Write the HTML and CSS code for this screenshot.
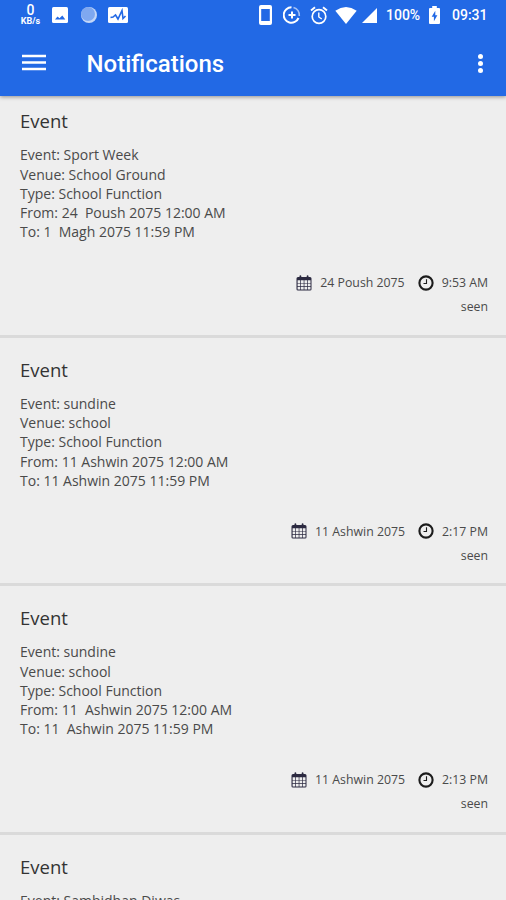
FILE: index.html
```
<!DOCTYPE html>
<html lang="en">
<head>
    <meta charset="UTF-8">
    <meta name="viewport" content="width=device-width, initial-scale=1.0">
    <title>Notifications</title>
    <link rel="stylesheet" href="styles.css">
</head>
<body>
    <!-- shared icons -->
    <svg class="sprite" width="0" height="0">
        <symbol id="calendar" viewBox="0 0 16 16">
            <path fill-rule="evenodd" d="M2 2h1.5V1.2Q3.500.3 4.400.3Q5.300.3 5.300 1.200V2h5.400V1.200Q10.700.3 11.600.3Q12.500.3 12.500 1.200V2H14q1.500 0 1.500 1.500v10.700Q15.500 15.600 14 15.600H2Q.5 15.600.5 14.200V3.500Q.5 2 2 2zM1.600 5.300v2.600h2.500v-2.600zM4.800 5.300v2.600h2.900v-2.600zM8.400 5.300v2.600h2.900v-2.600zM12 5.300v2.600h2.500v-2.600zM1.600 8.600v2.500h2.500v-2.500zM4.800 8.600v2.500h2.900v-2.500zM8.400 8.600v2.500h2.900v-2.500zM12 8.600v2.500h2.500v-2.500zM1.600 11.800v2.700h2.500v-2.700zM4.800 11.800v2.700h2.900v-2.700zM8.400 11.800v2.700h2.900v-2.700zM12 11.800v2.700h2.500v-2.700z"/>
        </symbol>
        <symbol id="clock" viewBox="0 0 16 16">
            <circle cx="8" cy="8" r="6.600" fill="none" stroke="currentColor" stroke-width="2.100"/>
            <path d="M8.500 4.200v4.300H5.500" fill="none" stroke="currentColor" stroke-width="1.100"/>
        </symbol>
    </svg>

    <header class="header">
        <div class="status-bar">
            <div class="status-left">
                <div class="speed"><b>0</b><span>KB/s</span></div>
                <svg class="icon-image" width="16" height="16" viewBox="0 0 16 16">
                    <rect width="16" height="16" rx="1.500" fill="#fff"/>
                    <path d="M3 12.500l2.500-3 2 1.700L10.300 8.500l3 4z" fill="#2269e5"/>
                </svg>
                <svg class="icon-moon" width="18" height="18" viewBox="0 0 18 18">
                    <circle cx="9" cy="9" r="8" fill="#c4d7f8"/>
                    <circle cx="8" cy="8" r="7" fill="#7fa8f0"/>
                </svg>
                <svg class="icon-graph" width="20" height="16" viewBox="0 0 20 16">
                    <rect width="20" height="16" rx="1.500" fill="#fff"/>
                    <path d="M2.500 10.500l2.500-.5 2.500-2 2.500 4 4-8.500 1 8 2.500-2.500" fill="none" stroke="#2269e5" stroke-width="1.600"/>
                </svg>
            </div>
            <div class="status-right">
                <svg class="icon-phone" width="13" height="20" viewBox="0 0 13 20">
                    <path fill="#fff" fill-rule="evenodd" d="M2 0h9q2 0 2 2v16q0 2-2 2H2q-2 0-2-2V2Q0 0 2 0zM2.200 4v12h8.600V4z"/>
                </svg>
                <svg class="icon-saver" width="18" height="18" viewBox="0 0 18 18" fill="none" stroke="#fff">
                    <path d="M8.500 1.300a7.700 7.700 0 1 0 7 10.700" stroke-width="2"/>
                    <path d="M10.500 1.500a7.700 7.700 0 0 1 5.800 8.500" stroke-width="1.600" stroke="#a5c1f5"/>
                    <path d="M9 5.500v7M5.500 9h7" stroke-width="2"/>
                </svg>
                <svg class="icon-alarm" width="18" height="19" viewBox="0 0 18 19" fill="none" stroke="#fff">
                    <circle cx="9" cy="10.500" r="6.800" stroke-width="1.700"/>
                    <path d="M1 4.600L5 1.300M17 4.600L13 1.300" stroke-width="1.900"/>
                    <path d="M8.800 6.500v4.500l3 2" stroke-width="1.400"/>
                </svg>
                <svg class="icon-wifi" width="22" height="17" viewBox="0 0 22 17">
                    <path d="M11 17L.3 3.700Q11-3.500 21.700 3.700z" fill="#fff"/>
                </svg>
                <svg class="icon-signal" width="15" height="15" viewBox="0 0 15 15">
                    <path d="M15 0v15H0z" fill="#fff"/>
                </svg>
                <span class="percent">100%</span>
                <svg class="icon-battery" width="11" height="18" viewBox="0 0 11 18">
                    <path d="M3.200 0h4.600v2H10q1 0 1 1v14q0 1-1 1H1q-1 0-1-1V3q0-1 1-1h2.200z" fill="#fff"/>
                    <path d="M6.300 4.800L2.700 10.700h2.200v4.500l3.500-5.900H6.300z" fill="#2269e5"/>
                </svg>
                <span class="time">09:31</span>
            </div>
        </div>
        <div class="toolbar">
            <svg class="menu" width="24" height="17" viewBox="0 0 24 17">
                <path d="M0 2h24M0 8.500h24M0 15h24" stroke="#fff" stroke-width="2.500"/>
            </svg>
            <h1>Notifications</h1>
            <div class="more"><i></i><i></i><i></i></div>
        </div>
    </header>

    <main class="list">
        <article class="item">
            <h2>Event</h2>
            <p class="details">Event: Sport Week
Venue: School Ground
Type: School Function
From: 24  Poush 2075 12:00 AM
To: 1  Magh 2075 11:59 PM</p>
            <div class="meta">
                <svg class="calendar"><use href="#calendar"/></svg>
                <span>24 Poush 2075</span>
                <svg class="clock"><use href="#clock"/></svg>
                <span>9:53 AM</span>
            </div>
            <div class="seen">seen</div>
        </article>

        <article class="item">
            <h2>Event</h2>
            <p class="details">Event: sundine
Venue: school
Type: School Function
From: 11 Ashwin 2075 12:00 AM
To: 11 Ashwin 2075 11:59 PM</p>
            <div class="meta">
                <svg class="calendar"><use href="#calendar"/></svg>
                <span>11 Ashwin 2075</span>
                <svg class="clock"><use href="#clock"/></svg>
                <span>2:17 PM</span>
            </div>
            <div class="seen">seen</div>
        </article>

        <article class="item">
            <h2>Event</h2>
            <p class="details">Event: sundine
Venue: school
Type: School Function
From: 11  Ashwin 2075 12:00 AM
To: 11  Ashwin 2075 11:59 PM</p>
            <div class="meta">
                <svg class="calendar"><use href="#calendar"/></svg>
                <span>11 Ashwin 2075</span>
                <svg class="clock"><use href="#clock"/></svg>
                <span>2:13 PM</span>
            </div>
            <div class="seen">seen</div>
        </article>

        <article class="item">
            <h2>Event</h2>
            <p class="details">Event: Sambidhan Diwas</p>
        </article>
    </main>
</body>
</html>
```
FILE: styles.css
```
* {
    box-sizing: border-box;
}
body {
    margin: 0;
    height: 900px;
    overflow: hidden;
    display: flex;
    flex-direction: column;
    background-color: #eee;
    font-family: "Open Sans", sans-serif;
    color: #4a4a4a;
}
.sprite {
    display: none;
}
.header {
    flex: none;
    height: 96px;
    background-color: #2269e5;
    color: #fff;
    font-family: Roboto, sans-serif;
    box-shadow: 0 1px 4px rgba(0, 0, 0, 0.4);
}
.list {
    flex: 1;
    min-height: 0;
    overflow: hidden;
    margin-top: 3px;
}
.status-bar {
    display: flex;
    justify-content: space-between;
    height: 30px;
    padding: 0 18px 0 20px;
}
.status-left, .status-right {
    display: flex;
    align-items: center;
}
.speed {
    width: 21px;
    text-align: center;
    font-weight: 700;
}
.speed b {
    display: block;
    font-size: 14px;
    line-height: 13px;
    font-weight: 500;
}
.speed span {
    display: block;
    font-size: 9px;
    line-height: 9px;
}
.icon-image {
    margin-left: 11px;
}
.icon-moon {
    margin-left: 12px;
}
.icon-graph {
    margin-left: 10px;
}
.icon-saver {
    margin-left: 11px;
}
.icon-alarm {
    margin-left: 9px;
}
.icon-wifi {
    margin-left: 7px;
}
.icon-signal {
    margin-left: 5px;
}
.percent, .time {
    font-size: 14px;
    font-weight: 500;
    white-space: nowrap;
}
.percent {
    margin-left: 9px;
    width: 35px;
}
.icon-battery {
    margin-left: 8px;
}
.time {
    margin-left: 12px;
    width: 36px;
}
.toolbar {
    display: flex;
    align-items: center;
    height: 66px;
    padding: 0 23px 0 22px;
}
.menu {
    margin-top: -1px;
}
.toolbar h1 {
    flex: 1;
    margin: 1px 0 0 40.500px;
    font-size: 24px;
    font-weight: 500;
    line-height: 32px;
}
.more {
    display: flex;
    flex-direction: column;
    gap: 2px;
}
.more i {
    width: 5px;
    height: 5px;
    border-radius: 50%;
    background-color: #fff;
}
.item {
    height: 248.500px;
    padding: 18px 18px 0 20px;
    border-bottom: 3px solid #dadada;
}
.item:first-child {
    height: 238.500px;
    padding-top: 8px;
}
.item h2 {
    margin: 0 0 10.400px;
    font-size: 18.500px;
    font-weight: 400;
    line-height: 28px;
    color: #333;
}
.details {
    margin: 0;
    height: 120.600px;
    font-size: 14px;
    line-height: 19.200px;
    white-space: pre;
}
.meta {
    display: flex;
    justify-content: flex-end;
    align-items: center;
    height: 34px;
    font-size: 12.300px;
}
.meta svg {
    width: 16px;
    height: 16px;
    color: #1c1c1c;
}
.calendar {
    fill: #2b2940;
    margin-right: 8px;
}
.clock {
    margin: 0 8px 0 13px;
}
.seen {
    margin-top: -0.500px;
    text-align: right;
    font-size: 12.300px;
    line-height: 16px;
}
```
